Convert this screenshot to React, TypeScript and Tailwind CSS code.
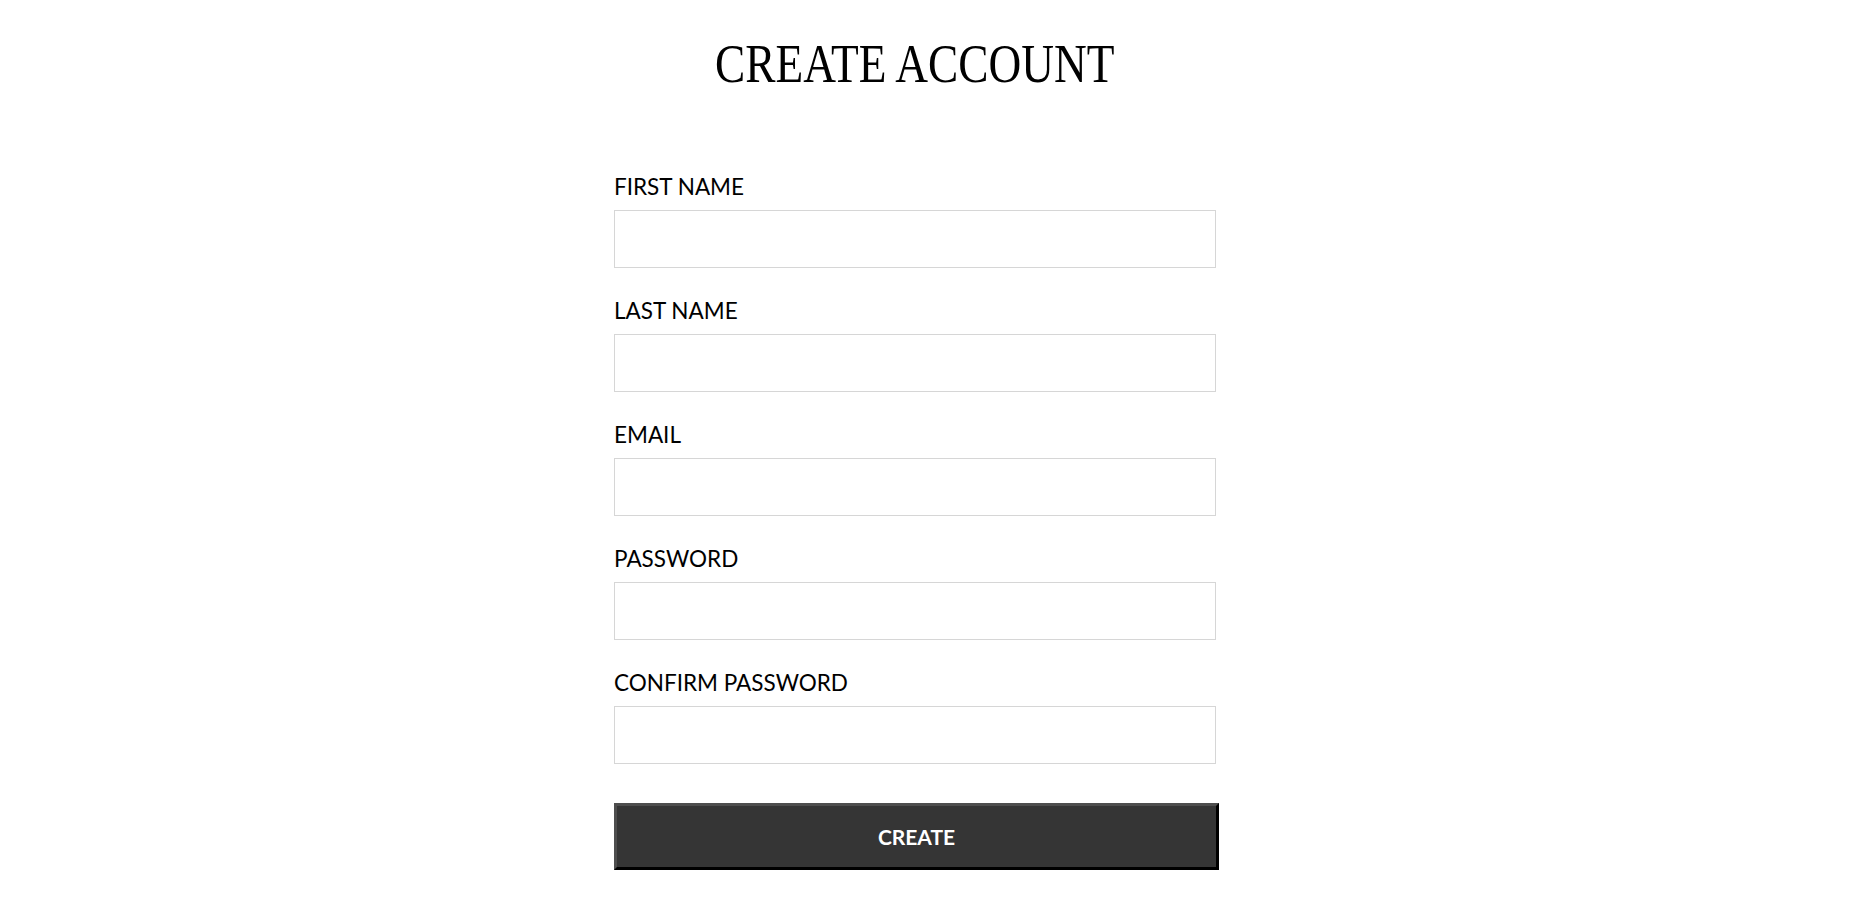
import React from "react";

const FIELDS = [
  { id: "first_name", label: "FIRST NAME", type: "text" },
  { id: "last_name", label: "LAST NAME", type: "text" },
  { id: "email", label: "EMAIL", type: "email" },
  { id: "password", label: "PASSWORD", type: "password" },
  { id: "confirm_password", label: "CONFIRM PASSWORD", type: "password" },
];

export default function App() {
  return (
    <main className="min-h-[1900px] bg-white text-black">
      <section className="ml-[614px] w-[602px] pt-[37px]">
        {/* heading */}
        <h1 className="text-center font-['Liberation_Serif',serif] text-[54px] leading-[54px] font-normal">
          <span className="inline-block scale-x-[0.84]">CREATE ACCOUNT</span>
        </h1>

        {/* form */}
        <form className="mt-[82px] flex flex-col gap-[29px]" onSubmit={(e) => e.preventDefault()}>
          {FIELDS.map((f) => (
            <div key={f.id} className="flex flex-col">
              <label htmlFor={f.id} className="mb-[9px] font-['Lato',sans-serif] text-[22.5px] leading-[28px] text-black">
                {f.label}
              </label>
              <input
                id={f.id}
                type={f.type}
                className="h-[58px] w-full border border-[#d6d6d6] bg-white px-3 font-['Lato',sans-serif] text-[18px] outline-none"
              />
            </div>
          ))}

          <button
            type="submit"
            className="mt-[10px] h-[67px] w-[605px] border-[3px] border-t-[#4e4e4e] border-l-[#4e4e4e] border-r-black border-b-black bg-[#353535] font-['Lato',sans-serif] text-[21px] font-bold text-white"
          >
            CREATE
          </button>
        </form>
      </section>
    </main>
  );
}
